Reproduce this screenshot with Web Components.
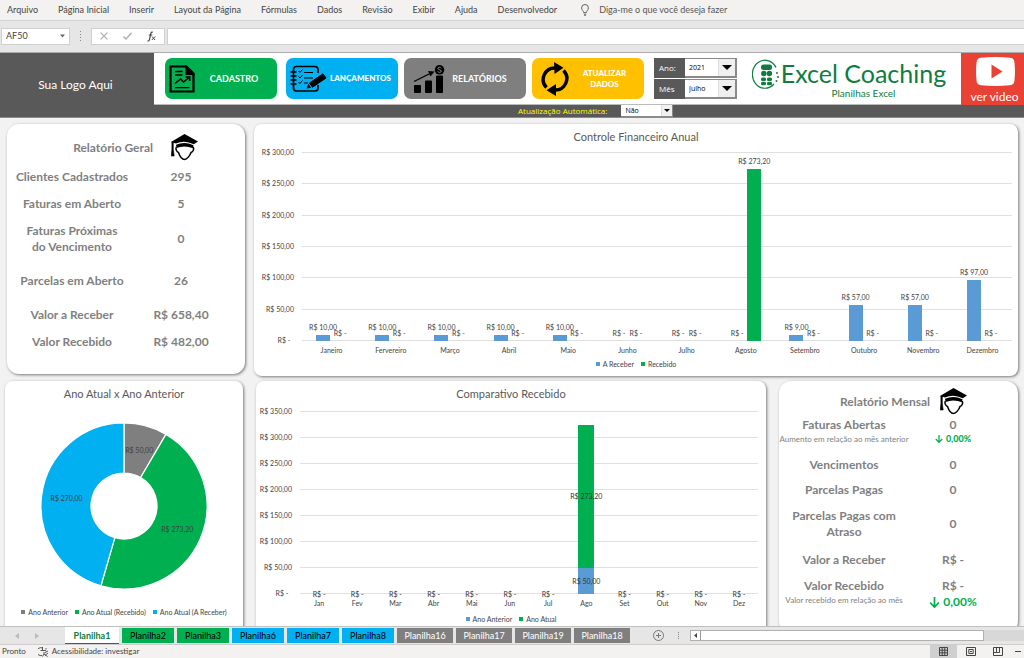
<!DOCTYPE html>
<html lang="pt-BR">
<head>
<meta charset="utf-8">
<title>Planilha financeira</title>
<style>
  html, body { margin: 0; height: 100%; }
  body { font-family: "Lato", "Open Sans", sans-serif; color: #595959; background: #f2f2f2; }
</style>
</head>
<body>
<excel-app></excel-app>

<script>
const UI = '"Lato", "Open Sans", sans-serif';
const SMALL = '"Open Sans", "Noto Sans", sans-serif';

class Base extends HTMLElement {
  connectedCallback() {
    if (this.shadowRoot) return;
    const t = document.createElement('template');
    t.innerHTML = `<style>*{box-sizing:border-box}${this.css()}</style>${this.html()}`;
    this.attachShadow({ mode: 'open' }).append(t.content.cloneNode(true));
  }
  css() { return ''; }
  html() { return '<slot></slot>'; }
}

/* ---------- ribbon ---------- */
class RibbonMenu extends Base {
  css() { return `
    :host{display:block;background:#f3f2f1;border-bottom:1px solid #d2d2d2;font:9px/20px ${UI};color:#444}
    nav{display:flex;align-items:center;gap:20px;padding:0 7px;height:20px;white-space:nowrap}
    a{color:inherit;text-decoration:none}
    .tell{display:flex;align-items:center;gap:10px;margin-left:4px;color:#555}
    svg{display:block}`; }
  html() {
    const items = ['Arquivo','Página Inicial','Inserir','Layout da Página','Fórmulas','Dados','Revisão','Exibir','Ajuda','Desenvolvedor'];
    return `<nav>${items.map(i => `<a href="#">${i}</a>`).join('')}
      <a href="#" class="tell"><svg width="8" height="12" viewBox="0 0 8 12" fill="none" stroke="#555" stroke-width=".9"><path d="M2.6 8.6C2.6 6.8.6 6.200.6 3.900A3.400 3.400 0 0 1 7.400 3.900C7.400 6.200 5.400 6.800 5.400 8.600ZM2.800 10.200H5.200M3.200 11.400H4.800"/></svg>Diga-me o que você deseja fazer</a></nav>`; }
}
customElements.define('ribbon-menu', RibbonMenu);

class FormulaBar extends Base {
  css() { return `
    :host{display:flex;align-items:center;gap:10px;background:#e6e6e6;padding:7px 0 8px 1px;height:32px;font:9px/16px ${UI};color:#444;border-bottom:1px solid #ababab}
    .name{display:flex;align-items:center;width:69px;height:17px;background:#fff;border:1px solid #cfcfcf;padding:0 4px}
    .name input{width:48px;min-width:0;flex:1;border:0;padding:0;background:none;font:9px/14px "Lato",sans-serif;color:#444}
    .dots{display:grid;gap:2px}.dots i{width:1px;height:1px;background:#888}
    .tools{display:flex;align-items:center;justify-content:space-around;width:74px;height:17px;background:#fff;border:1px solid #cfcfcf}
    button{border:0;background:none;padding:0;display:flex}
    .fx{flex:1;height:17px;background:#fff;border:1px solid #cfcfcf;border-right:0;margin-left:-8px;padding:0 4px;font:9px ${UI};min-width:0}`; }
  html() { return `
    <div class="name"><input aria-label="Caixa de nome" value="AF50"><svg width="5" height="4"><path d="M0 .5H5L2.500 3.500Z" fill="#666"/></svg></div>
    <div class="dots"><i></i><i></i><i></i><i></i></div>
    <div class="tools">
      <button aria-label="Cancelar"><svg width="8" height="8"><path d="M.5.5L7.500 7.500M7.500.5L.5 7.500" stroke="#b5b5b5" stroke-width="1.200"/></svg></button>
      <button aria-label="Inserir"><svg width="9" height="8"><path d="M.5 4.500L3 7L8.500.8" fill="none" stroke="#b5b5b5" stroke-width="1.600"/></svg></button>
      <button aria-label="Inserir função"><svg width="9" height="11" fill="none" stroke="#444"><path d="M5.800 1.300C4.600.6 4 1.300 3.700 2.800L2.500 8.500C2.200 9.800 1.600 10.300.5 9.800M1.800 4H5.200" stroke-width="1.200"/><path d="M5 5.500L8 9M8.200 5.500L4.800 9"/></svg></button>
    </div>
    <input class="fx" aria-label="Barra de fórmulas">`; }
}
customElements.define('formula-bar', FormulaBar);

/* ---------- dashboard header ---------- */
const ICONS = {
  doc: `<svg width="26" height="28" viewBox="0 0 26 28" fill="none" stroke="#000"><path d="M1.500 1.500H17.500L24.500 8.500V26.500H1.500Z" stroke-width="2.200"/><path d="M17 1V9.500H25Z" fill="#000" stroke-width="1.200"/><path d="M6 6.500H13.500M6 10H13.500M6 22.700H20.500" stroke-width="1.300"/><path d="M6 18.500L11.500 14L14.500 17L20 12.500M16.500 12H20.700V16" stroke-width="1.600"/></svg>`,
  notes: `<svg width="37" height="28" viewBox="0 0 37 28" fill="none" stroke="#000"><path d="M28 8V4.500A3 3 0 0 0 25 1.500H6.500A3 3 0 0 0 3.500 4.500V23A3 3 0 0 0 6.500 26H25A3 3 0 0 0 28 23V20" stroke-width="1.700"/><path d="M.5 7H6.500M.5 11H6.500M.5 15H6.500M.5 19H6.500" stroke-width="1.300"/><path d="M8.500 6L10 7.500L12.500 4.500M8.500 11.500L10 13L12.500 10M8.500 17L10 18.500L12.500 15.500" stroke-width="1"/><path d="M14 7.500H23M14 13H23M14 18H18" stroke-width="1"/><path d="M19.500 18L33 8.800L36 13L22.500 22.200Z" fill="#000"/><path d="M18.500 18.800L21 22.800L16.500 23.500Z" fill="#000" stroke="none"/></svg>`,
  chart: `<svg width="32" height="28" viewBox="0 0 32 28"><rect x="1" y="20" width="7" height="8" rx="1"/><rect x="12" y="15.500" width="7" height="12.500" rx="1"/><rect x="23" y="10.500" width="7" height="17.500" rx="1"/><path d="M1 16.500L18 8" stroke="#000" stroke-width="1.300"/><path d="M15 6L21.500 6.500L17.500 11.500Z"/><circle cx="26.500" cy="4.800" r="4.800"/><path d="M28.300 3.200C27.600 1.800 24.900 2 24.900 3.500C24.900 5 28.300 4.500 28.300 6.200C28.300 7.700 25.200 7.800 24.600 6.300" fill="none" stroke="#909090" stroke-width="1"/></svg>`,
  sync: `<svg width="28" height="34" viewBox="0 0 28 34" fill="none" stroke="#000" stroke-width="3.400"><path d="M5.500 25.500A11.500 11.500 0 0 1 14.500 6"/><path d="M22.500 8.500A11.500 11.500 0 0 1 13.500 28"/><path d="M13 0L22.500 5.800L13.500 12Z" fill="#000" stroke="none"/><path d="M15 22L5.500 28.200L15 34Z" fill="#000" stroke="none"/></svg>`
};

class NavButton extends Base {
  css() { return `
    :host{display:block;width:112px;--c:#00b050}
    :host([wide]){width:122px}
    button{display:flex;align-items:center;width:100%;height:41px;padding:0 4px;border:0;border-radius:7px;background:var(--c);color:#fff;font:700 9px/11px "Lato",sans-serif;text-align:center}
    :host([compact]) button{font-weight:900;font-size:8px}
    span{flex:1}
    svg{display:block}
    :host([wide]) button{padding-right:12px}
    :host([wide]) svg,:host([icon=sync]) svg{margin-left:5px}`; }
  html() { return `<button>${ICONS[this.getAttribute('icon')]}<span><slot></slot></span></button>`; }
}
customElements.define('nav-button', NavButton);

class DropField extends Base {
  css() { return `
    :host{display:flex;height:20px;font:8px/20px ${SMALL};color:#fff}
    :host([small]){height:12px;line-height:12px;color:#ff0}
    label{width:31px;padding-left:5px;background:#595959;white-space:nowrap}
    :host([small]) label{width:auto;padding:0 14px 0 0}
    .box{display:grid;grid-template-columns:1fr auto;width:52px;background:#fff;border:1px solid #8a8a8a;border-width:1px 2px 2px 0}
    :host([small]) .box{border-width:0 1px 1px 0}
    select{grid-area:1/1/2/3;appearance:none;border:0;background:none;padding:0 0 0 4px;font:7px ${SMALL};color:#000;min-width:0}
    i{grid-area:1/2;width:17px;background:#f0f0f0;border-left:1px solid #ddd;display:grid;place-items:center;pointer-events:none}
    :host([small]) i{width:11px}`; }
  html() {
    const small = this.hasAttribute('small');
    return `<label for="s">${this.getAttribute('label')}</label><div class="box"><select id="s"><option>${this.getAttribute('value')}</option></select>
      <i><svg width="${small ? 6 : 10}" height="${small ? 3 : 5}" viewBox="0 0 10 5"><path d="M0 0H10L5 5Z"/></svg></i></div>`; }
}
customElements.define('drop-field', DropField);

class BrandLogo extends Base {
  css() { return `
    :host{display:flex;gap:1px;color:#107c41}
    svg{display:block;flex:none}
    .t{display:flex;flex-direction:column;align-items:center;white-space:nowrap}
    b{font:400 25px/29px "Lato",sans-serif}
    small{font:10px/10px "Lato",sans-serif}`; }
  html() { return `
    <svg width="28" height="32" viewBox="0 0 28 32" fill="none" stroke="#107c41" stroke-width="1.200"><path d="M24 8.500A12.600 14 0 1 0 22 25"/><g fill="#107c41" stroke="none"><rect x="9" y="5.500" width="11" height="5.500" rx="2.500"/><circle cx="11.800" cy="14.500" r="2.700"/><circle cx="17.400" cy="14.500" r="2.700"/><rect x="9" y="18.500" width="5" height="3.500" rx="1.500"/><rect x="15" y="18.500" width="5" height="3.500" rx="1.500"/><rect x="9" y="22.800" width="5" height="3.500" rx="1.500"/><rect x="15" y="22.800" width="5" height="3.500" rx="1.500"/><circle cx="25" cy="14" r="1"/><circle cx="26" cy="18" r="1"/><circle cx="24.500" cy="22" r="1"/></g></svg>
    <div class="t"><b>Excel Coaching</b><small>Planilhas Excel</small></div>`; }
}
customElements.define('brand-logo', BrandLogo);

class DashHeader extends Base {
  css() { return `
    :host{display:grid;grid-template-columns:154px 1fr 63px;grid-template-rows:52px 12px;background:#595959;border-bottom:1px solid #8c8c8c}
    .logo{grid-row:1/3;display:grid;place-items:center;color:#fff;font-size:12px;line-height:16px;padding:0 3px 1px 0}
    .bar{display:flex;align-items:center;background:#fff;padding-left:11px;border-bottom:1px solid #bbb}
    .bar nav-button:nth-of-type(2){margin-left:9px}
    .bar nav-button:nth-of-type(n+3){margin-left:6px}
    .fields{display:grid;gap:1px;margin-left:10px}
    brand-logo{margin:0 auto}
    .video{display:flex;flex-direction:column;align-items:center;justify-content:space-between;background:#e94235;color:#fff;text-decoration:none;padding:4px 0 2px;font:12px/13px "Lato",sans-serif;white-space:nowrap}
    .video svg{display:block;margin-left:6px}
    .video span{margin-left:4px}
    .auto{grid-column:2/4;padding-left:364px}`; }
  html() { return `
    <div class="logo">Sua Logo Aqui</div>
    <div class="bar">
      <nav-button icon="doc">CADASTRO</nav-button>
      <nav-button icon="notes" compact style="--c:#00b0f0">LANÇAMENTOS</nav-button>
      <nav-button icon="chart" wide style="--c:#7f7f7f">RELATÓRIOS</nav-button>
      <nav-button icon="sync" compact style="--c:#ffc000">ATUALIZAR<br>DADOS</nav-button>
      <div class="fields"><drop-field label="Ano:" value="2021"></drop-field><drop-field label="Mês" value="Julho"></drop-field></div>
      <brand-logo></brand-logo>
    </div>
    <a class="video" href="#"><svg width="39" height="29" viewBox="0 0 39 29"><path d="M5 .8Q19.500-.8 34 .8Q38 1 38.400 5Q39.500 14.500 38.400 24Q38 28 34 28.200Q19.500 29.800 5 28.200Q1 28 .6 24Q-.5 14.500.6 5Q1 1 5 .8Z" fill="#fff"/><path d="M15.500 7.500L26.500 14.500L15.500 21.500Z" fill="#e94235"/></svg><span>ver video</span></a>
    <div class="auto"><drop-field small label="Atualização Automática:" value="Não"></drop-field></div>`; }
}
customElements.define('dash-header', DashHeader);

/* ---------- report card ---------- */
class ReportCard extends Base {
  css() { return `
    :host{display:block;background:#fff;border-radius:12px;box-shadow:1px 1px 3px rgba(0,0,0,.5);color:#7f7f7f;font:700 12px/16px "Lato",sans-serif}
    header{display:flex;align-items:center;justify-content:flex-end;gap:18px;padding:10px 47px 2px 0}
    :host([monthly]) header{gap:10px;padding:7px 51px 2px 0}
    h2{font:inherit;margin:0}
    svg{display:block}`; }
  html() { return `
    <header><h2>${this.getAttribute('heading')}</h2>
    <svg width="27" height="27" viewBox="0 0 27 27"><path d="M13.500 0L27 7.500L22.800 10.200Q13.500 5.500 5 9.500L0 8Z"/><path d="M5 10.800Q13.500 7 22.500 11.200L22 14.200Q13.500 10.800 5.500 14Z"/><path d="M5.300 13C4.300 15.500 6 18 7.500 18.500C8.500 21.500 11 25.500 13.500 25.500C16 25.500 19 21.500 20 18.500C22 18 23.200 15.500 22.300 13" fill="none" stroke="#000" stroke-width="1.500"/><path d="M.9 8H2.300V15.500L3.200 22H.2L.9 15.500Z" stroke="#000" stroke-width=".6"/></svg></header>
    <slot></slot>`; }
}
customElements.define('report-card', ReportCard);

class ReportRow extends Base {
  css() { return `
    :host{display:grid;grid-template-columns:130px 88px;align-items:center;justify-items:center;text-align:center;min-height:27px}
    :host([tall]){min-height:44px}
    :host([loose]){min-height:40px}
    :host([snug]){min-height:25px}
    :host([note]){min-height:35px;align-items:start}
    :host([big]){padding-top:5px}
    .l{white-space:pre-line}
    small{font:400 8px/12px "Lato",sans-serif;white-space:nowrap}
    .d{display:flex;align-items:center;justify-content:center;gap:3px;color:#00b050;font:900 9px/12px "Lato",sans-serif}
    :host([big]) .d{font-weight:700;font-size:12px;line-height:16px}
    .c{display:flex;flex-direction:column;align-items:center}`; }
  html() {
    const g = n => this.getAttribute(n), s = this.hasAttribute('big') ? 11 : 8;
    return `<div class="c"><span class="l">${g('label').replace('|', '<br>')}</span>${g('note') ? `<small>${g('note')}</small>` : ''}</div>
      <div class="c"><span>${g('value')}</span>${g('delta') ? `<span class="d"><svg width="${s}" height="${s}" viewBox="0 0 10 10" fill="none" stroke="#00b050" stroke-width="1.600"><path d="M5 0V9M1 5L5 9.200L9 5"/></svg>${g('delta')}</span>` : ''}</div>`; }
}
customElements.define('report-row', ReportRow);

/* ---------- charts ---------- */
const money = v => v ? 'R$ ' + v.toFixed(2).replace('.', ',') : 'R$ -';
const chartCss = `
  :host{display:flex;flex-direction:column;background:#fff;border-radius:8px;box-shadow:1px 1px 3px rgba(0,0,0,.5);padding-top:5px;font:7px/10px "Lato",sans-serif;color:#444;min-width:0}
  h2{margin:0;font:400 11px/16px "Lato",sans-serif;text-align:center;color:#595959}
  .legend{display:flex;justify-content:center;gap:7px;white-space:nowrap}
  .legend span{display:flex;align-items:center;gap:3px}
  .legend i{width:4px;height:4px}`;
const legend = list => `<div class="legend">${list.map(([n, c]) => `<span><i style="background:${c}"></i>${n}</span>`).join('')}</div>`;

class BarChart extends Base {
  css() { return chartCss + `
    .area{display:grid;grid-template-columns:40px 1fr;column-gap:8px;padding-right:6px;margin-top:7px}
    .y{display:flex;flex-direction:column;justify-content:space-between;text-align:right;height:var(--plot)}
    .y span{height:1px;line-height:1px;white-space:pre}
    .plot{display:grid;height:var(--plot)}
    .grid{grid-area:1/1;display:flex;flex-direction:column;justify-content:space-between}
    .grid i{height:1px;background:#e0e0e0}
    .bars{grid-area:1/1;display:flex;min-height:0}
    .cat{flex:1;min-width:0;display:flex;justify-content:center;gap:3px;height:100%}
    .col{width:14px;height:100%;display:flex;flex-direction:column;justify-content:flex-end;align-items:center}
    .col span{white-space:nowrap;line-height:10px;margin-bottom:3px;width:0;display:flex;justify-content:center}
    .col i{width:14px;flex:none}
    .stack{width:16px;height:100%;display:flex;flex-direction:column-reverse}
    .stack div{display:flex;align-items:center;justify-content:center;white-space:nowrap;color:#333;line-height:0}
    .x{grid-column:2;display:flex;text-align:center;margin-top:4px}
    .x span{flex:1;min-width:0}
    .legend{margin-top:4px}
    :host([stacked]) .area{padding-right:8px;margin-top:9px;grid-template-columns:36px 1fr}
    :host([stacked]) .legend{margin-top:6px}`; }
  html() {
    const max = +this.getAttribute('max'), colors = ['#5b9bd5', '#00b050'];
    const cats = this.getAttribute('cats').split(',');
    const series = this.getAttribute('values').split(';').map(s => s.split(',').map(Number));
    const names = this.getAttribute('series').split(',');
    const ticks = []; for (let v = max; v >= 0; v -= 50) ticks.push(v);
    const pct = v => `${v / max * 100}%`;
    const cell = i => this.hasAttribute('stacked')
      ? `<div class="stack">${series.map((s, k) => s[i] || !k ? `<div style="height:${pct(s[i])};background:${colors[k]}">${money(s[i])}</div>` : '').join('')}</div>`
      : series.map((s, k) => `<div class="col"><span>${money(s[i])}</span><i style="height:${pct(s[i])};background:${colors[k]}"></i></div>`).join('');
    return `<h2>${this.getAttribute('heading')}</h2>
      <div class="area">
        <div class="y">${ticks.map(v => `<span>${money(v)}${v ? '' : '  '}</span>`).join('')}</div>
        <div class="plot"><div class="grid">${ticks.map(() => '<i></i>').join('')}</div>
          <div class="bars">${cats.map((c, i) => `<div class="cat">${cell(i)}</div>`).join('')}</div></div>
        <div class="x">${cats.map(c => `<span>${c}</span>`).join('')}</div>
      </div>${legend(names.map((n, k) => [n, colors[k]]))}`; }
}
customElements.define('bar-chart', BarChart);

class DonutChart extends Base {
  css() { return chartCss + `
    svg{display:block;width:166px;height:166px;margin:21px auto 18px}
    text{font:7px "Lato",sans-serif;fill:#404040;text-anchor:middle}`; }
  html() {
    const data = [['Ano Anterior', 50, '#7f7f7f'], ['Ano Atual (Recebido)', 273.2, '#00b050'], ['Ano Atual (A Receber)', 270, '#00b0f0']];
    const sum = data.reduce((a, d) => a + d[1], 0), R = 83, r = 33;
    const pt = (q, a) => `${(83 + q * Math.sin(a)).toFixed(2)} ${(83 - q * Math.cos(a)).toFixed(2)}`;
    let a = 0, arcs = '', labels = '';
    for (const [, v, c] of data) {
      const b = a + v / sum * 2 * Math.PI, m = (a + b) / 2;
      arcs += `<path d="M${pt(R, a)}A${R} ${R} 0 0 1 ${pt(R, b)}L${pt(r, b)}A${r} ${r} 0 0 0 ${pt(r, a)}Z" fill="${c}" stroke="#fff" stroke-width="1.200"/>`;
      labels += `<text x="${83 + 58 * Math.sin(m)}" y="${86 - 58 * Math.cos(m)}">${money(v)}</text>`;
      a = b;
    }
    return `<h2>Ano Atual x Ano Anterior</h2><svg viewBox="0 0 166 166">${arcs}${labels}</svg>${legend(data.map(d => [d[0], d[2]]))}`; }
}
customElements.define('donut-chart', DonutChart);

class DashBoard extends Base {
  css() { return `
    :host{display:block;flex:1;min-height:0;overflow:hidden;background:#f2f2f2}
    section{display:flex;align-items:flex-start}
    .top{gap:9px;padding:6px 6px 0 7px}
    .bottom{gap:13px;padding:5px 6px 0 5px}
    report-card{width:238px;flex:none;min-height:250px}
    .bottom report-card{width:239px;min-height:252px}
    donut-chart{width:238px;flex:none;min-height:260px}
    bar-chart{flex:1}
    .top bar-chart{--plot:189px;min-height:252px}
    .bottom bar-chart{--plot:183px;min-height:260px}`; }
  html() { return `
    <section class="top">
      <report-card heading="Relatório Geral">
        <report-row label="Clientes Cadastrados" value="295"></report-row>
        <report-row label="Faturas em Aberto" value="5"></report-row>
        <report-row tall label="Faturas Próximas|do Vencimento" value="0"></report-row>
        <report-row loose label="Parcelas em Aberto" value="26"></report-row>
        <report-row label="Valor a Receber" value="R$ 658,40"></report-row>
        <report-row label="Valor Recebido" value="R$ 482,00"></report-row>
      </report-card>
      <bar-chart heading="Controle Financeiro Anual" max="300" series="A Receber,Recebido"
        cats="Janeiro,Fervereiro,Março,Abril,Maio,Junho,Julho,Agosto,Setembro,Outubro,Novembro,Dezembro"
        values="10,10,10,10,10,0,0,0,9,57,57,97;0,0,0,0,0,0,0,273.2,0,0,0,0"></bar-chart>
    </section>
    <section class="bottom">
      <donut-chart></donut-chart>
      <bar-chart stacked heading="Comparativo Recebido" max="350" series="Ano Anterior,Ano Atual"
        cats="Jan,Fev,Mar,Abr,Mai,Jun,Jul,Ago,Set,Out,Nov,Dez"
        values="0,0,0,0,0,0,0,50,0,0,0,0;0,0,0,0,0,0,0,273.2,0,0,0,0"></bar-chart>
      <report-card monthly heading="Relatório Mensal">
        <report-row note="Aumento em relação ao mês anterior" label="Faturas Abertas" value="0" delta="0,00%"></report-row>
        <report-row snug label="Vencimentos" value="0"></report-row>
        <report-row snug label="Parcelas Pagas" value="0"></report-row>
        <report-row tall label="Parcelas Pagas com|Atraso" value="0"></report-row>
        <report-row label="Valor a Receber" value="R$ -"></report-row>
        <report-row big note="Valor recebido em relação ao mês" label="Valor Recebido" value="R$ -" delta="0,00%"></report-row>
      </report-card>
    </section>`; }
}
customElements.define('dash-board', DashBoard);

/* ---------- sheet tabs and status ---------- */
class SheetTabs extends Base {
  css() { return `
    :host{display:flex;align-items:center;height:19px;background:#e6e6e6;border-top:1px solid #c0c0c0;border-bottom:1px solid #cdcdcd;font:9px/15px ${UI}}
    .nav{display:flex;gap:16px;width:65px;padding-left:15px;flex:none}
    .tabs{display:flex;gap:3px;align-items:center}
    button{border:0;padding:0;height:15px;width:52px;font:9px/15px ${UI};color:#000;background:var(--c)}
    .g{--c:#00b050}.b{--c:#00b0f0}.n{--c:#7f7f7f;color:#fff;width:56px}
    .on{--c:#fff;color:#107c41;font-weight:700;width:54px;height:17px;border-bottom:1px solid #107c41}
    .add{width:11px;height:11px;background:none;margin-left:23px;flex:none}
    .dots{display:grid;gap:1px;margin:0 11px 0 14px}.dots i{width:1px;height:1px;background:#888}
    .scroll{flex:1;display:flex;background:#d8d8d8;height:11px}
    .scroll div{width:294px;background:#fff;border:1px solid #b0b0b0;display:flex;align-items:center}
    .scroll span{display:grid;place-items:center;width:10px;height:9px;border-right:1px solid #999}
    svg{display:block}`; }
  html() {
    const tabs = [['1','on'],['2','g'],['3','g'],['6','b'],['7','b'],['8','b'],['16','n'],['17','n'],['19','n'],['18','n']];
    return `<div class="nav"><svg width="4" height="6"><path d="M4 0V6L0 3Z" fill="#bbb"/></svg><svg width="4" height="6"><path d="M0 0V6L4 3Z" fill="#bbb"/></svg></div>
      <div class="tabs">${tabs.map(([n, c]) => `<button class="${c}">Planilha${n}</button>`).join('')}</div>
      <button class="add" aria-label="Nova planilha"><svg width="11" height="11" fill="none" stroke="#777"><circle cx="5.500" cy="5.500" r="5"/><path d="M5.500 3V8M3 5.500H8"/></svg></button>
      <div class="dots"><i></i><i></i><i></i><i></i></div>
      <div class="scroll"><div><span><svg width="3" height="5"><path d="M3 0V5L0 2.500Z" fill="#444"/></svg></span></div></div>`; }
}
customElements.define('sheet-tabs', SheetTabs);

class StatusBar extends Base {
  css() { return `
    :host{display:flex;align-items:center;height:13px;background:#f3f2f1;font:8px/13px ${UI};color:#444;padding-left:2px;white-space:nowrap}
    .acc{display:flex;align-items:center;gap:3px;margin-left:12px}
    .v{margin-left:auto;display:flex;align-items:center}
    .v button{width:27px;height:13px;border:0;padding:0;background:none;display:grid;place-items:center}
    .v .on{background:#cfcfcf}
    .v .z{width:13px}
    svg{display:block}`; }
  html() { return `Pronto
    <span class="acc"><svg width="11" height="10" fill="none" stroke="#444"><path d="M4.500 1A4 4 0 1 0 4 8.500M4.500 0V3M2.500 3.500H8M8 1V2.500M6 5V7L4.500 9.500M6 7L9.500 9.500M7 5.500L10 4M7 8.500L10 6" stroke-width=".9"/></svg>Acessibilidade: investigar</span>
    <div class="v">
      <button class="on" aria-label="Normal"><svg width="9" height="9" fill="none" stroke="#444"><path d="M.5.5H8.500V8.500H.5ZM.5 3.200H8.500M.5 5.800H8.500M3.200.5V8.500M5.800.5V8.500"/></svg></button>
      <button aria-label="Layout da Página"><svg width="10" height="9" fill="none" stroke="#444"><path d="M.5.5H9.500V8.500H.5ZM2.800 2.500H7.200V6.500H2.800ZM4 4.500H6"/></svg></button>
      <button aria-label="Quebra de página"><svg width="10" height="9" fill="none" stroke="#444"><path d="M.5.5H9.500V8.500H.5ZM3.500.5V5.500H6.500V.5M.5 5.500H3.500"/></svg></button>
      <button class="z" aria-label="Menos zoom"><svg width="6" height="1"><path d="M0 .5H6" stroke="#444"/></svg></button>
    </div>`; }
}
customElements.define('status-bar', StatusBar);

class ExcelApp extends Base {
  css() { return `:host{display:flex;flex-direction:column;height:100vh;overflow:hidden}`; }
  html() { return `<ribbon-menu></ribbon-menu><formula-bar></formula-bar><dash-header></dash-header><dash-board></dash-board><sheet-tabs></sheet-tabs><status-bar></status-bar>`; }
}
customElements.define('excel-app', ExcelApp);
</script>
</body>
</html>
